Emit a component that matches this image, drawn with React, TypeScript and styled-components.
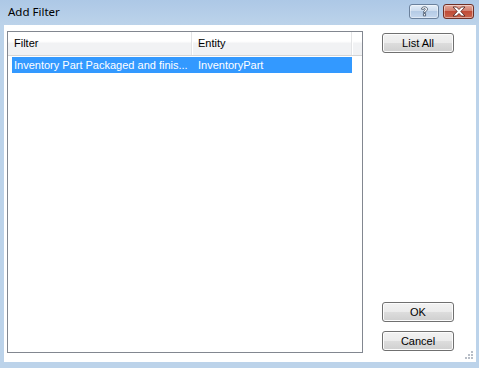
import * as React from "react";
import styled, {createGlobalStyle} from "styled-components";

const GlobalStyle = createGlobalStyle`
	html, body {
		margin: 0;
		padding: 0;
		background: #bcd3ea;
	}
	body {
		font-family: "Liberation Sans", Arial, sans-serif;
		font-size: 11px;
		color: #000;
	}
`

const FILTERS = [
	{name: "Inventory Part Packaged and finis...", entity: "InventoryPart", selected: true},
]

const HelpGlyph = () => (
	<svg width="9" height="11" viewBox="0 0 9 11">
		<path
			d="M1.5 3.2 C1.5 1.4 3 0.8 4.5 0.8 C6.3 0.8 7.5 1.8 7.5 3.2 C7.5 4.6 5.6 5 5.6 6.4 L3.4 6.4 C3.4 4.6 5.3 4.3 5.3 3.3 C5.3 2.8 5 2.5 4.5 2.5 C3.9 2.5 3.6 2.9 3.6 3.4 Z M3.4 7.6 L5.6 7.6 L5.6 9.9 L3.4 9.9 Z"
			fill="#ffffff"
			stroke="#39485c"
			strokeWidth="0.8"
			strokeLinejoin="round"
		/>
	</svg>
)

const CloseGlyph = () => (
	<svg width="14" height="11" viewBox="0 0 14 11">
		<path
			d="M1 1 L4.5 1 L7 3.5 L9.5 1 L13 1 L8.8 5.5 L13 10 L9.5 10 L7 7.5 L4.5 10 L1 10 L5.2 5.5 Z"
			fill="#ffffff"
			stroke="#4a1c16"
			strokeWidth="0.8"
			strokeLinejoin="round"
		/>
	</svg>
)

const SizeGrip = () => (
	<svg width="10" height="10" viewBox="0 0 10 10">
		{[[7, 1], [4, 4], [7, 4], [1, 7], [4, 7], [7, 7]].map(([x, y]) => (
			<g key={`${x}-${y}`}>
				<rect x={x + 1} y={y + 1} width="2" height="2" fill="#ffffff" />
				<rect x={x} y={y} width="2" height="2" fill="#b8bec7" />
			</g>
		))}
	</svg>
)

const App = () => {
	return (
		<>
			<GlobalStyle />
			<Window>

				<TitleBar>
					<Caption>Add Filter</Caption>
					<CaptionButtons>
						<CaptionButton variant="help"><HelpGlyph /></CaptionButton>
						<CaptionButton variant="close"><CloseGlyph /></CaptionButton>
					</CaptionButtons>
				</TitleBar>

				<Client>

					<ListView>
						<Header>
							<HeaderCell width={184}>Filter</HeaderCell>
							<HeaderCell width={160}>Entity</HeaderCell>
							<HeaderFill />
						</Header>
						<Rows>
							{FILTERS.map(filter => (
								<Row key={filter.name} selected={filter.selected}>
									<Cell width={180} first>{filter.name}</Cell>
									<Cell width={160}>{filter.entity}</Cell>
								</Row>
							))}
						</Rows>
					</ListView>

					<SidePanel>
						<Button>List All</Button>
						<Spacer />
						<Button>OK</Button>
						<Button>Cancel</Button>
					</SidePanel>

					<Grip><SizeGrip /></Grip>

				</Client>

			</Window>
		</>
	)
}

const Window = styled.div`
	width: 479px;
	height: 368px;
	display: flex;
	flex-direction: column;
	background: linear-gradient(#adc8e6 0px, #bcd3ea 25px, #bcd3ea 100%);
	overflow: hidden;
`

const TitleBar = styled.div`
	height: 25px;
	display: flex;
	align-items: flex-start;
	justify-content: space-between;
	padding-left: 8px;
	padding-right: 5px;
	box-sizing: border-box;
	flex-shrink: 0;
`

const Caption = styled.span`
	font-family: "Noto Sans", "Open Sans", sans-serif;
	font-size: 11.5px;
	line-height: 16px;
	margin-top: 4px;
	color: #000;
`

const CaptionButtons = styled.div`
	display: flex;
	gap: 4px;
	margin-top: 4px;
`

const CaptionButton = styled.div<{variant: "help" | "close"}>`
	width: ${(props) => props.variant === "close" ? 31 : 30}px;
	height: 15px;
	box-sizing: border-box;
	border-radius: 3px;
	display: flex;
	align-items: center;
	justify-content: center;
	border: 1px solid ${(props) => props.variant === "close" ? "#6f3026" : "#6b819c"};
	background: ${(props) => props.variant === "close"
		? "linear-gradient(#e4a89b 0%, #d2806f 45%, #c04c37 50%, #c8644c 100%)"
		: "linear-gradient(#e4eef8 0%, #cddcee 45%, #b5cbe5 50%, #c6d8ee 100%)"};
	box-shadow: inset 0 0 0 1px rgba(255, 255, 255, 0.45);
`

const Client = styled.div`
	flex: 1;
	position: relative;
	display: flex;
	margin: 0 3px 6px 4px;
	padding: 6px 0 9px 3px;
	background: #ffffff;
`

const ListView = styled.div`
	width: 356px;
	box-sizing: border-box;
	border: 1px solid #828790;
	display: flex;
	flex-direction: column;
	background: #ffffff;
`

const Header = styled.div`
	display: flex;
	height: 24px;
	box-sizing: border-box;
	border-bottom: 1px solid #d5d5d5;
	background: linear-gradient(#ffffff 0%, #ffffff 40%, #f1f2f4 50%, #f1f2f4 100%);
`

const HeaderCell = styled.div<{width: number}>`
	width: ${(props) => props.width}px;
	box-sizing: border-box;
	padding-left: 6px;
	line-height: 23px;
	border-right: 1px solid #e3e4e6;
	box-shadow: 1px 0 0 #ffffff;
	white-space: nowrap;
	overflow: hidden;
`

const HeaderFill = styled.div`
	flex: 1;
`

const Rows = styled.div`
	display: flex;
	flex-direction: column;
	padding-top: 1px;
`

const Row = styled.div<{selected?: boolean}>`
	display: flex;
	height: 16px;
	margin-left: 4px;
	width: 340px;
	background: ${(props) => props.selected ? "#3399ff" : "transparent"};
	color: ${(props) => props.selected ? "#ffffff" : "#000000"};
`

const Cell = styled.div<{width: number, first?: boolean}>`
	width: ${(props) => props.width}px;
	box-sizing: border-box;
	padding-left: ${(props) => props.first ? 2 : 6}px;
	line-height: 16px;
	white-space: nowrap;
	overflow: hidden;
`

const SidePanel = styled.div`
	width: 72px;
	margin-left: 19px;
	padding: 2px 0 2px;
	display: flex;
	flex-direction: column;
	gap: 9px;
`

const Spacer = styled.div`
	flex: 1;
`

const Button = styled.div`
	height: 20px;
	box-sizing: border-box;
	border: 1px solid #707070;
	border-radius: 3px;
	display: flex;
	align-items: center;
	justify-content: center;
	background: linear-gradient(#f2f2f2 0%, #ebebeb 50%, #dddddd 50%, #cfcfcf 100%);
	box-shadow: inset 0 0 0 1px #fcfcfc;
	font-size: 11px;
	color: #000;
`

const Grip = styled.div`
	position: absolute;
	right: 2px;
	bottom: 2px;
	width: 10px;
	height: 10px;
	line-height: 0;
`

export default App;
